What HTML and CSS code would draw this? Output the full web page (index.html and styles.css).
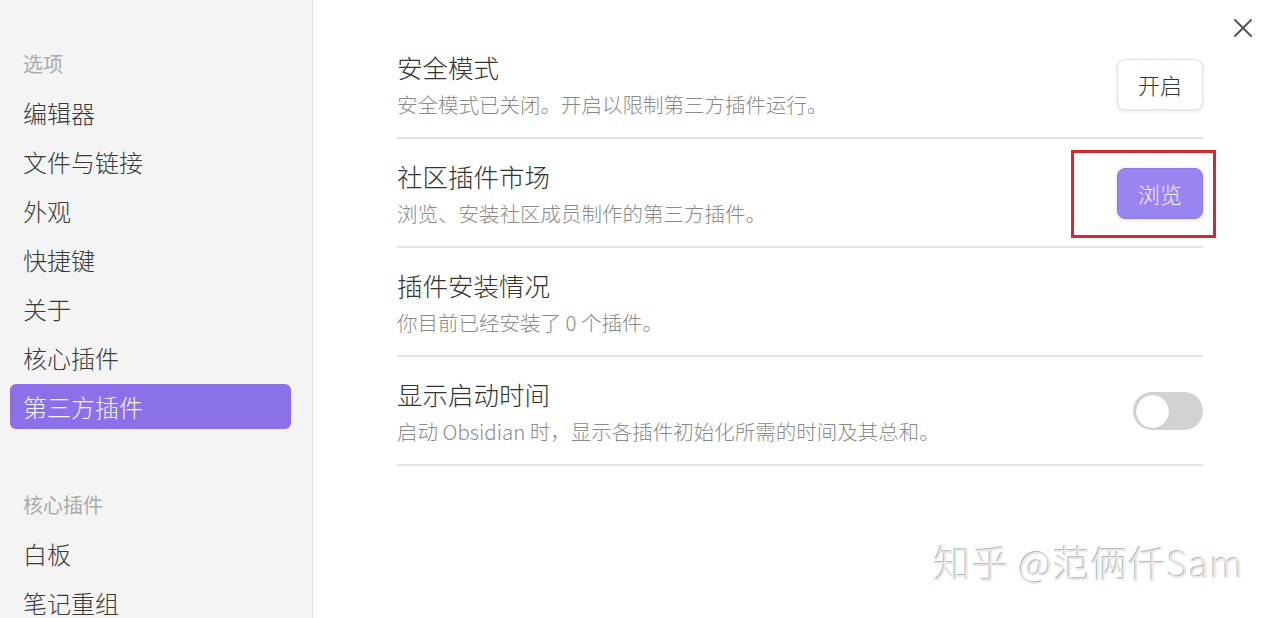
FILE: index.html
```html
<!DOCTYPE html>
<html lang="zh-CN">
<head>
<meta charset="utf-8">
<title>设置 - 第三方插件</title>
<link rel="stylesheet" href="styles.css">
</head>
<body>
<div class="app">
  <nav class="sidebar">
    <div class="group">
      <div class="group-title">选项</div>
      <div class="nav-item">编辑器</div>
      <div class="nav-item">文件与链接</div>
      <div class="nav-item">外观</div>
      <div class="nav-item">快捷键</div>
      <div class="nav-item">关于</div>
      <div class="nav-item">核心插件</div>
      <div class="nav-item active">第三方插件</div>
    </div>
    <div class="group group-second">
      <div class="group-title">核心插件</div>
      <div class="nav-item">白板</div>
      <div class="nav-item">笔记重组</div>
    </div>
  </nav>
  <main class="content">
    <button class="close" aria-label="关闭">
      <svg width="20" height="20" viewBox="0 0 20 20"><path d="M2 2 L18 18 M18 2 L2 18" stroke="#555" stroke-width="2" stroke-linecap="round" fill="none"/></svg>
    </button>
    <div class="setting">
      <div class="info">
        <div class="name">安全模式</div>
        <div class="desc">安全模式已关闭。开启以限制第三方插件运行。</div>
      </div>
      <div class="control"><button class="btn">开启</button></div>
    </div>
    <div class="setting">
      <div class="info">
        <div class="name">社区插件市场</div>
        <div class="desc">浏览、安装社区成员制作的第三方插件。</div>
      </div>
      <div class="control marked"><button class="btn btn-cta">浏览</button></div>
    </div>
    <div class="setting">
      <div class="info">
        <div class="name">插件安装情况</div>
        <div class="desc">你目前已经安装了 0 个插件。</div>
      </div>
    </div>
    <div class="setting">
      <div class="info">
        <div class="name">显示启动时间</div>
        <div class="desc">启动 Obsidian 时，显示各插件初始化所需的时间及其总和。</div>
      </div>
      <div class="control"><div class="toggle"><span class="knob"></span></div></div>
    </div>
    <div class="watermark">知乎 @范俩仟Sam</div>
  </main>
</div>
</body>
</html>
```
FILE: styles.css
```css
* { box-sizing: border-box; }
html, body {
  margin: 0;
  padding: 0;
  height: 618px;
  overflow: hidden;
  background: #fff;
  font-family: "Noto Sans CJK SC", "Noto Sans", "Liberation Sans", sans-serif;
  font-weight: 300;
}
.app {
  display: flex;
  height: 618px;
}
.sidebar {
  width: 313px;
  flex: none;
  background: #f4f4f4;
  border-right: 1px solid #e2e2e2;
  padding: 41px 21px 0 10px;
}
.group {
  display: flex;
  flex-direction: column;
  gap: 4px;
}
.group-second {
  margin-top: 53px;
}
.group-title {
  height: 45px;
  line-height: 45px;
  padding-left: 13px;
  font-size: 20px;
  font-weight: 400;
  color: #ababab;
}
.nav-item {
  height: 45px;
  line-height: 45px;
  padding-left: 13px;
  font-size: 24px;
  color: #3a3a3a;
  border-radius: 6px;
}
.nav-item.active {
  background: #8a71e8;
  color: #f6f3ff;
}
.content {
  flex: 1;
  position: relative;
  padding: 30px 77px 0 84px;
}
.close {
  position: absolute;
  top: 18px;
  right: 27px;
  width: 20px;
  height: 20px;
  padding: 0;
  border: none;
  background: none;
}
.close svg { display: block; }
.setting {
  display: flex;
  align-items: center;
  justify-content: space-between;
  padding: 19px 0 18px;
  border-bottom: 2px solid #e6e6e6;
}
.info {
  display: flex;
  flex-direction: column;
  gap: 4px;
}
.name {
  font-size: 25.5px;
  line-height: 36px;
  color: #333;
}
.desc {
  font-size: 20.5px;
  line-height: 30px;
  color: #8a8a8a;
}
.control {
  position: relative;
  display: flex;
}
.btn {
  width: 86px;
  height: 51px;
  font-family: inherit;
  font-weight: 300;
  font-size: 22px;
  color: #333;
  background: #fff;
  border: 1px solid #e4e4e4;
  border-radius: 8px;
  box-shadow: 0 1px 4px rgba(0,0,0,0.12);
  padding: 0;
}
.btn-cta {
  background: #9a85f0;
  border-color: #8f7ae6;
  color: #f3f0ff;
}
.marked::after {
  content: "";
  position: absolute;
  left: -46px;
  right: -13px;
  top: -18px;
  bottom: -19px;
  border: 3px solid #d12a33;
}
.toggle {
  width: 70px;
  height: 38px;
  border-radius: 19px;
  background: #d2d2d2;
  padding: 3px;
  display: flex;
  align-items: center;
}
.knob {
  width: 33px;
  height: 33px;
  border-radius: 50%;
  background: #fff;
  box-shadow: 0 0 1px rgba(0,0,0,0.2);
}
.watermark {
  position: absolute;
  left: 621px;
  top: 538px;
  font-size: 37px;
  font-weight: 300;
  line-height: 48px;
  color: #e8e8e8;
  letter-spacing: 0.8px;
  text-shadow: -1px -1px 0 #b8b8b8, 1px 1px 0 #fafafa;
  white-space: nowrap;
}
```
